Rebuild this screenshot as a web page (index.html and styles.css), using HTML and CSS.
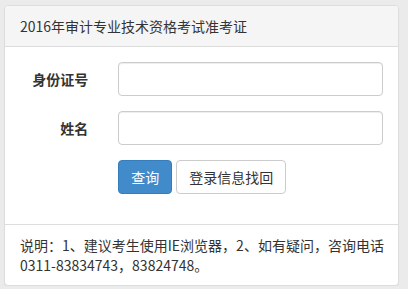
FILE: index.html
```html
<!DOCTYPE html>
<html lang="zh-CN">
<head>
  <meta charset="UTF-8" />
  <meta name="viewport" content="width=device-width, initial-scale=1.0"/>
  <title>2016年审计专业技术资格考试准考证</title>
  <link rel="stylesheet" href="styles.css">
</head>
<body>
  <div class="panel">
    <div class="panel-heading">2016年审计专业技术资格考试准考证</div>
    <form class="panel-body" id="queryForm">
      <div class="form-group">
        <label class="form-label" for="idcard">身份证号</label>
        <div class="form-field"><input type="text" id="idcard" class="form-control" /></div>
      </div>
      <div class="form-group">
        <label class="form-label" for="name">姓名</label>
        <div class="form-field"><input type="text" id="name" class="form-control" /></div>
      </div>
      <div class="form-group">
        <div class="form-label"></div>
        <div class="form-field actions">
          <button type="submit" class="btn btn-primary">查询</button>
          <button type="button" class="btn btn-default">登录信息找回</button>
        </div>
      </div>
    </form>
    <div class="panel-footer">说明：1、建议考生使用IE浏览器，2、如有疑问，咨询电话<br>0311-83834743，83824748。</div>
  </div>
</body>
</html>
```

FILE: styles.css
```css
body { margin: 0; padding: 5px 9px 0 4px; background: #ebebeb; font-family: "Noto Sans CJK SC", "Noto Sans", sans-serif; font-size: 14px; line-height: 20px; color: #333; }
.panel { background: #fff; border: 1px solid #ddd; border-radius: 4px; box-shadow: 0 1px 1px rgba(0,0,0,.05); }
.panel-heading { padding: 10px 15px; background: #f5f5f5; border-bottom: 1px solid #ddd; border-radius: 3px 3px 0 0; }
.panel-body { display: block; margin: 0; padding: 15px; }
.form-group { display: flex; margin: 0 -15px 15px; }
.form-label { flex: 0 0 25%; box-sizing: border-box; padding: 7px 15px 0; text-align: right; font-weight: bold; }
.form-field { flex: 1; padding: 0 15px; }
.form-control { display: block; box-sizing: border-box; width: 100%; height: 34px; padding: 6px 12px; font: inherit; border: 1px solid #ccc; border-radius: 4px; box-shadow: inset 0 1px 1px rgba(0,0,0,.075); }
.actions { display: flex; gap: 4px; }
.btn { height: 34px; padding: 6px 12px; font: inherit; border: 1px solid transparent; border-radius: 4px; }
.btn-primary { background: #428bca; border-color: #357ebd; color: #fff; }
.btn-default { background: #fff; border-color: #ccc; color: #333; }
.panel-footer { padding: 10px 15px; border-top: 1px solid #ddd; border-radius: 0 0 3px 3px; white-space: nowrap; }
```
